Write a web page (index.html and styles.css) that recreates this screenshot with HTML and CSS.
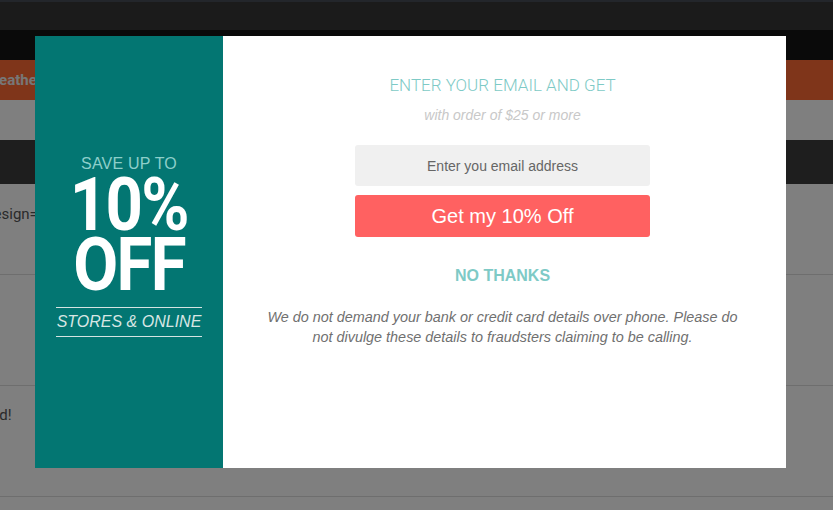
FILE: index.html
```html
<!DOCTYPE html>
<html>
<head>
<meta charset="utf-8">
<link rel="stylesheet" href="styles.css">
</head>
<body>
<div class="page">
  <div class="topstrip"></div>
  <div class="topbar"></div>
  <div class="navbar"></div>
  <div class="promo"><span class="promo-text">Leather</span></div>
  <div class="gap"></div>
  <div class="darkbar"></div>
  <div class="row row1"><span class="row-text">?design=</span></div>
  <div class="row row2"></div>
  <div class="row row3"><span class="row-text">Subscribed!</span></div>
  <div class="row row4"></div>
</div>
<div class="overlay"></div>
<div class="modal">
  <div class="modal-left">
    <div class="save">SAVE UP TO</div>
    <div class="big">10%</div>
    <div class="big">OFF</div>
    <div class="stores">STORES &amp; ONLINE</div>
  </div>
  <div class="modal-right">
    <div class="headline">ENTER YOUR EMAIL AND GET</div>
    <div class="sub">with order of $25 or more</div>
    <input class="email" type="text" placeholder="Enter you email address">
    <button class="cta">Get my 10% Off</button>
    <div class="nothanks">NO THANKS</div>
    <p class="disclaimer">We do not demand your bank or credit card details over phone. Please do not divulge these details to fraudsters claiming to be calling.</p>
  </div>
</div>
</body>
</html>
```
FILE: styles.css
```css
html, body {
  margin: 0;
  padding: 0;
  width: 833px;
  height: 510px;
  overflow: hidden;
  font-family: "Liberation Sans", Arial, sans-serif;
}
.page {
  display: flex;
  flex-direction: column;
  background: #ffffff;
}
.topstrip { height: 2px; background: #464c56; }
.topbar { height: 28px; background: #363636; }
.navbar { height: 30px; background: #141414; }
.promo {
  height: 40px;
  background: #ff6a34;
  display: flex;
  align-items: center;
  overflow: hidden;
}
.promo-text {
  margin-left: -9px;
  color: #eeeeee;
  font-weight: bold;
  font-size: 15px;
  font-family: Roboto, "Liberation Sans", sans-serif;
}
.gap { height: 40px; background: #ffffff; }
.darkbar { height: 44px; background: #3c3c3c; }
.row {
  background: #ffffff;
  border-bottom: 1px solid #dcdcdc;
  display: flex;
  align-items: flex-start;
  overflow: hidden;
}
.row1 { height: 90px; }
.row2 { height: 110px; }
.row3 { height: 110px; }
.row4 { height: 12px; border-bottom: none; }
.row-text {
  color: #555555;
  font-size: 15px;
  font-family: Roboto, "Liberation Sans", sans-serif;
  white-space: nowrap;
}
.row1 .row-text { margin-left: -22px; margin-top: 21px; }
.row3 .row-text { margin-left: -67px; margin-top: 20px; }

.overlay {
  position: absolute;
  inset: 0;
  background: rgba(0, 0, 0, 0.5);
}
.modal {
  position: absolute;
  left: 35px;
  top: 36px;
  width: 751px;
  height: 432px;
  display: flex;
  background: #ffffff;
}
.modal-left {
  width: 188px;
  background: #037672;
  display: flex;
  flex-direction: column;
  align-items: center;
  padding-top: 118px;
  box-sizing: border-box;
}
.save {
  color: #8dcfca;
  font-size: 16px;
  line-height: 20px;
  font-family: "Liberation Sans", Arial, sans-serif;
  letter-spacing: 0.2px;
}
.big {
  color: #ffffff;
  font-family: Roboto, "Liberation Sans", sans-serif;
  font-weight: bold;
  font-size: 75px;
  line-height: 60px;
  letter-spacing: -2px;
  transform: scaleX(0.87);
}
.stores {
  margin-top: 13px;
  width: 146px;
  border-top: 1px solid #d5e4e2;
  border-bottom: 1px solid #d5e4e2;
  color: #d8e6e4;
  font-style: italic;
  font-size: 16px;
  line-height: 28px;
  text-align: center;
}
.modal-right {
  flex: 1;
  display: flex;
  flex-direction: column;
  align-items: center;
  padding: 39px 4px 0 0;
  box-sizing: border-box;
}
.headline {
  color: #7ecac6;
  font-size: 17px;
  line-height: 20px;
  font-family: Roboto, "Liberation Sans", sans-serif;
  font-weight: 300;
}
.sub {
  margin-top: 11px;
  color: #c8c8c8;
  font-size: 14px;
  line-height: 18px;
  font-style: italic;
}
.email {
  margin-top: 21px;
  width: 295px;
  height: 41px;
  box-sizing: border-box;
  border: none;
  border-radius: 3px;
  background: #f0f0f0;
  text-align: center;
  font-family: "Liberation Sans", Arial, sans-serif;
  font-size: 14px;
  color: #666666;
  outline: none;
}
.email::placeholder { color: #666666; }
.cta {
  margin-top: 9px;
  width: 295px;
  height: 42px;
  border: none;
  border-radius: 3px;
  background: #ff6161;
  color: #ffffff;
  font-family: "Liberation Sans", Arial, sans-serif;
  font-size: 20px;
  padding: 0;
}
.nothanks {
  margin-top: 29px;
  color: #7ecac6;
  font-weight: bold;
  font-size: 16px;
  line-height: 20px;
}
.disclaimer {
  margin: 21px 0 0 0;
  width: 490px;
  color: #707070;
  font-style: italic;
  font-size: 14.4px;
  line-height: 20px;
  text-align: center;
}
```
